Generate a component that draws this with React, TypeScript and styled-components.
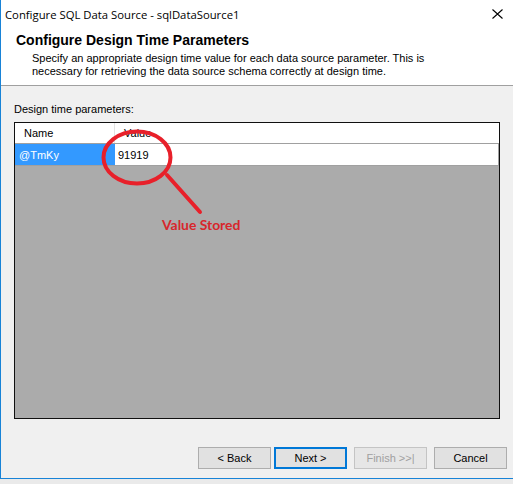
import {FC} from "react";
import styled, {createGlobalStyle} from "styled-components";

const GlobalStyle = createGlobalStyle`
  html, body {
    margin: 0;
    padding: 0;
    background: #eaeaea;
    overflow: hidden;
  }
`

const App: FC = () => {
  return <>
    <GlobalStyle/>
    <Window>
      <Header>
        <TitleBar>
          <TitleText>Configure SQL Data Source - sqlDataSource1</TitleText>
          <CloseIcon width="11" height="10" viewBox="0 0 11 10">
            <path d="M0.5 0.5 L10.5 9.5 M10.5 0.5 L0.5 9.5" stroke="#000" strokeWidth="1.1" fill="none"/>
          </CloseIcon>
        </TitleBar>
        <Heading>Configure Design Time Parameters</Heading>
        <Description>
          Specify an appropriate design time value for each data source parameter. This is<br/>
          necessary for retrieving the data source schema correctly at design time.
        </Description>
      </Header>
      <Body>
        <Label>Design time parameters:</Label>
        <Grid>
          <HeaderRow>
            <HeaderCell $width={100}>Name</HeaderCell>
            <HeaderCell>Value</HeaderCell>
          </HeaderRow>
          <DataRow>
            <NameCell>@TmKy</NameCell>
            <ValueCell>91919</ValueCell>
          </DataRow>
        </Grid>
        <ButtonRow>
          <NavGroup>
            <Button>&lt; Back</Button>
            <Button $primary>Next &gt;</Button>
          </NavGroup>
          <Button disabled>Finish &gt;&gt;|</Button>
          <Button>Cancel</Button>
        </ButtonRow>
      </Body>
      <Annotation width="513" height="484" viewBox="0 0 513 484">
        <ellipse cx="137" cy="157.5" rx="33.5" ry="26" stroke="#e8202a" strokeWidth="4" fill="none"/>
        <line x1="167" y1="175" x2="200" y2="212" stroke="#e8202a" strokeWidth="4" strokeLinecap="round"/>
      </Annotation>
      <AnnotationText>Value Stored</AnnotationText>
    </Window>
  </>
}

const Window = styled.div`
  position: relative;
  box-sizing: border-box;
  width: 513px;
  height: 479px;
  background: #f0f0f0;
  border-left: 1px solid #1883d7;
  border-bottom: 1px solid #1883d7;
  box-shadow: 0 2px 5px rgba(0, 0, 0, 0.18);
  display: flex;
  flex-direction: column;
  font-family: "Liberation Sans", Arial, sans-serif;
  font-size: 11px;
  color: #000;
`

const Header = styled.div`
  box-sizing: border-box;
  height: 86px;
  background: #fff;
  border-bottom: 1px solid #a0a0a0;
`

const TitleBar = styled.div`
  height: 28px;
  display: flex;
  align-items: center;
  justify-content: space-between;
  padding: 0 10px 0 4px;
`

const TitleText = styled.div`
  font-family: "Open Sans", "Noto Sans", sans-serif;
  font-size: 11.3px;
  color: #000;
`

const CloseIcon = styled.svg`
  display: block;
`

const Heading = styled.div`
  margin: 4px 0 0 15px;
  font-size: 14px;
  font-weight: bold;
  line-height: 16px;
`

const Description = styled.div`
  margin-top: 4px;
  padding-left: 31px;
  line-height: 13px;
`

const Body = styled.div`
  display: flex;
  flex-direction: column;
  padding: 0 13px;
`

const Label = styled.div`
  margin-top: 17px;
  line-height: 13px;
`

const Grid = styled.div`
  box-sizing: border-box;
  margin-top: 6px;
  width: 486px;
  height: 297px;
  border: 1px solid #101010;
  background: #ababab;
`

const HeaderRow = styled.div`
  box-sizing: border-box;
  display: flex;
  height: 21px;
  background: #fff;
  border-bottom: 1px solid #a0a0a0;
`

const HeaderCell = styled.div<{ $width?: number }>`
  box-sizing: border-box;
  display: flex;
  align-items: center;
  padding-left: 9px;
  ${p => p.$width ? `width: ${p.$width}px; border-right: 1px solid #e3e3e3;` : 'flex: 1;'}
`

const DataRow = styled.div`
  box-sizing: border-box;
  display: flex;
  height: 22px;
  border-bottom: 1px solid #a0a0a0;
`

const NameCell = styled.div`
  box-sizing: border-box;
  width: 100px;
  display: flex;
  align-items: center;
  padding-left: 4px;
  background: #3399ff;
  color: #fff;
`

const ValueCell = styled.div`
  box-sizing: border-box;
  flex: 1;
  display: flex;
  align-items: center;
  padding-left: 3px;
  background: #fff;
  border-right: 1px solid #a0a0a0;
`

const ButtonRow = styled.div`
  display: flex;
  justify-content: flex-end;
  gap: 7px;
  margin: 28px -7px 0 0;
`

const NavGroup = styled.div`
  display: flex;
  gap: 3px;
`

const Button = styled.button<{ $primary?: boolean }>`
  box-sizing: border-box;
  width: 73px;
  height: 22px;
  padding: 0;
  font-family: "Liberation Sans", Arial, sans-serif;
  font-size: 11px;
  color: #000;
  background: #e1e1e1;
  border: ${p => p.$primary ? '2px solid #0078d7' : '1px solid #adadad'};
  border-radius: 0;

  &:disabled {
    color: #a0a0a0;
    background: #e6e6e6;
    border-color: #c4c4c4;
  }
`

const Annotation = styled.svg`
  position: absolute;
  left: -1px;
  top: 0;
  pointer-events: none;
`

const AnnotationText = styled.div`
  position: absolute;
  left: 161px;
  top: 216px;
  font-family: Lato, "Open Sans", sans-serif;
  font-weight: 700;
  font-size: 13.9px;
  color: #d8262c;
`

export default App;
